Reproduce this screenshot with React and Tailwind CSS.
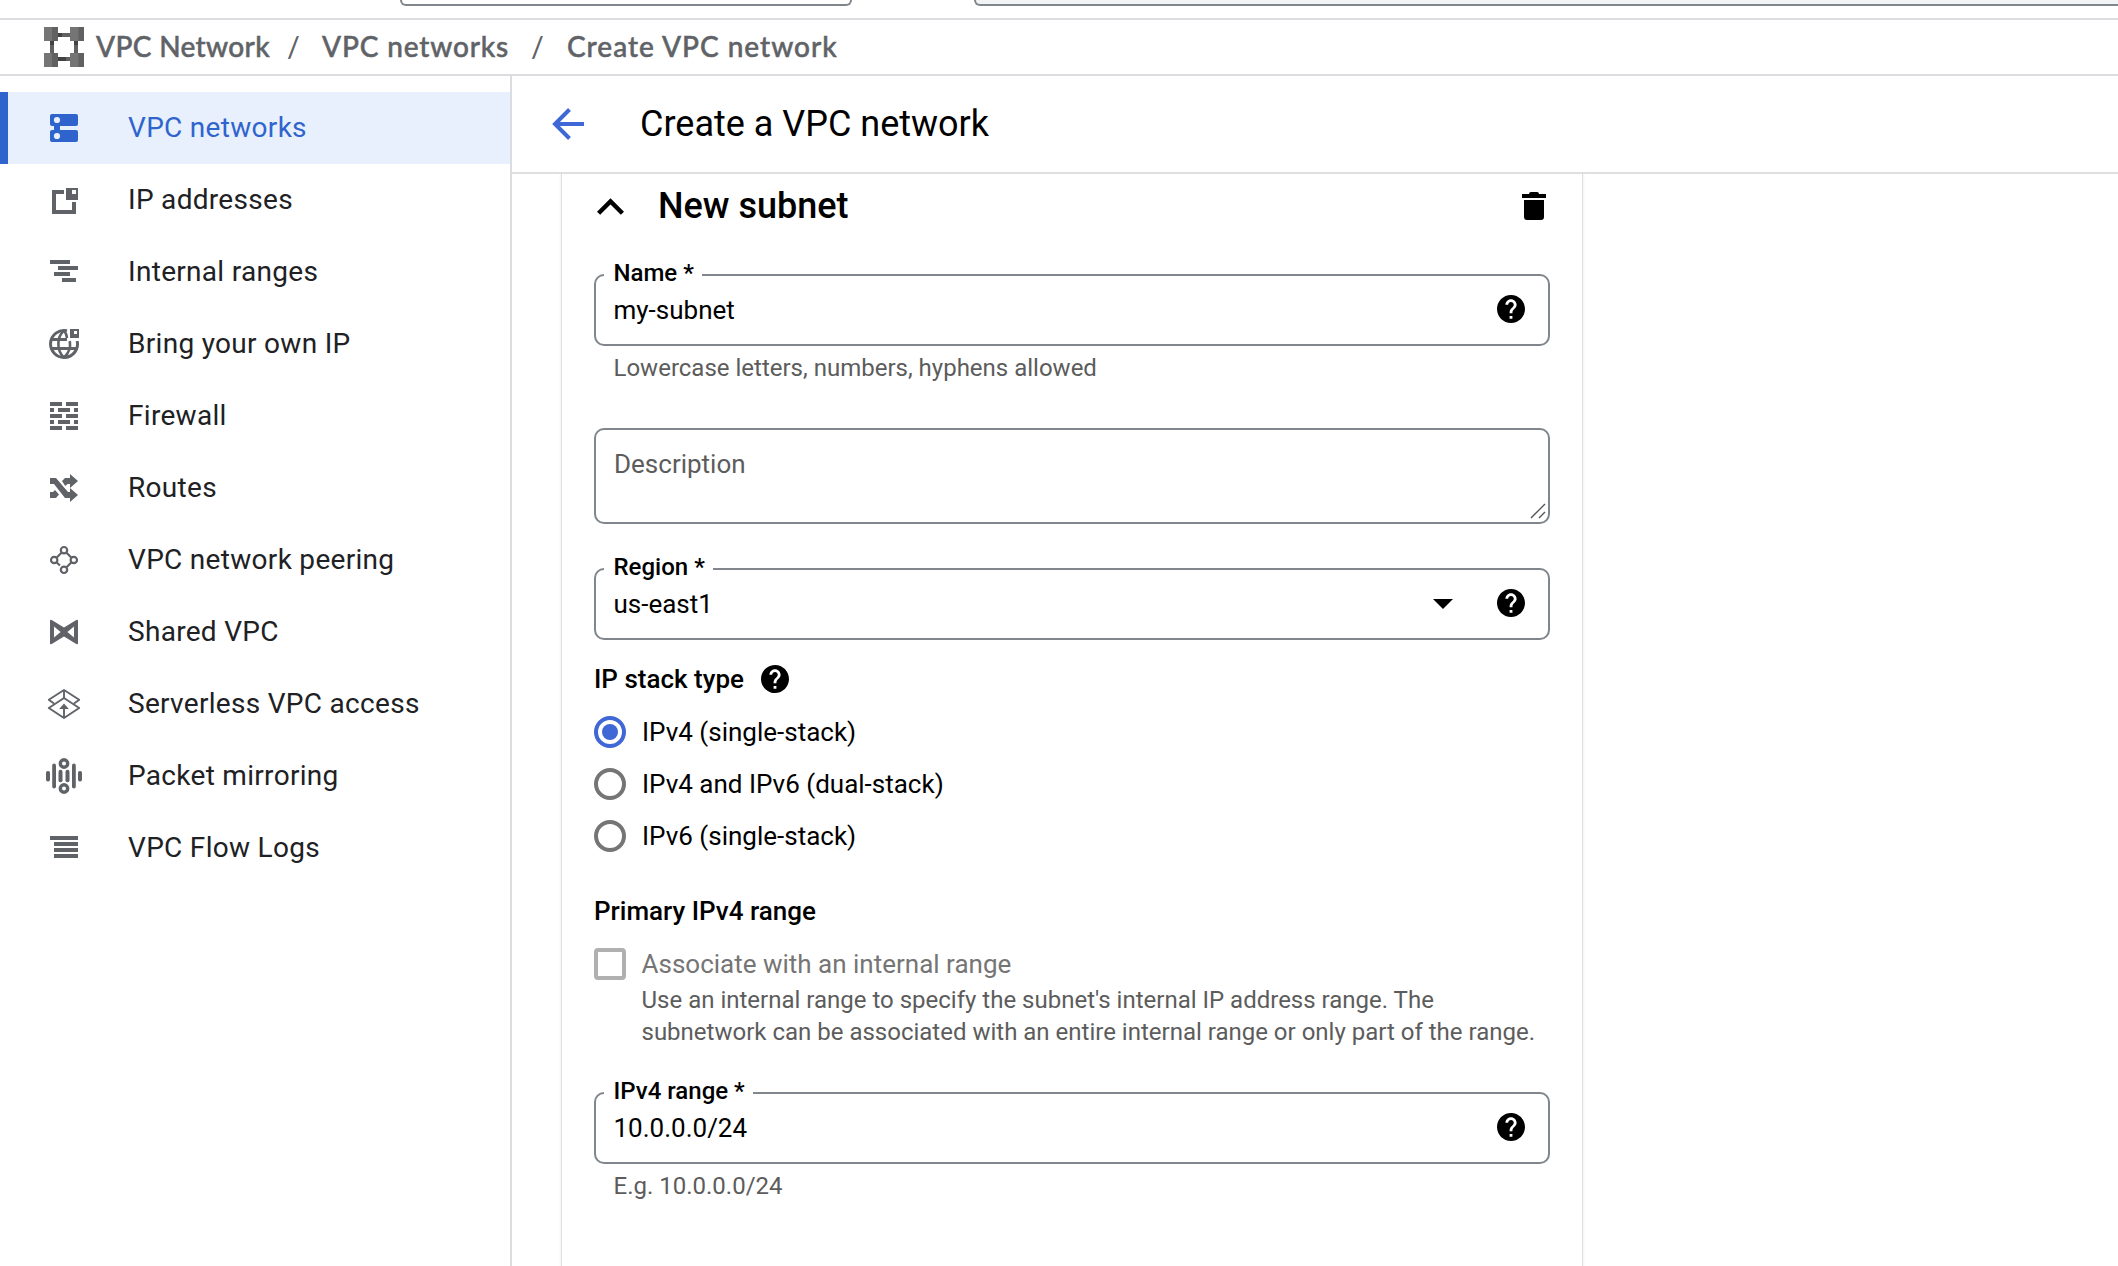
import React from "react";

function Icon({ children }) {
  return (
    <svg width="36" height="36" viewBox="0 0 36 36" fill="currentColor" className="shrink-0">
      {children}
    </svg>
  );
}

const icons = {
  networks: (
    <Icon>
      <rect x="4" y="4" width="28" height="12" rx="2" />
      <rect x="4" y="20" width="28" height="12" rx="2" />
      <rect x="8" y="14" width="6" height="8" />
      <circle cx="11" cy="10" r="3.1" fill="#e8f0fe" />
      <circle cx="11" cy="26" r="3.1" fill="#e8f0fe" />
    </Icon>
  ),
  addresses: (
    <Icon>
      <path d="M6 8h12v4h-8v16h16v-8h4v12H6z" />
      <path fillRule="evenodd" d="M20 6h12v12H20zM26 8v4h4V8z" />
    </Icon>
  ),
  ranges: (
    <Icon>
      <path d="M4 6h20v4H4zM12 12h20v4H12zM8 18h16v4H8zM16 24h14v4H16z" />
    </Icon>
  ),
  globe: (
    <Icon>
      <g fill="none" stroke="currentColor" strokeWidth="3">
        <path d="M21 4.8A13.5 13.5 0 1 0 31.2 15" />
        <path d="M5 13.5h16M5 22.5h26" strokeWidth="2.8" />
        <path d="M18 4.500C10.500 11 10.500 25 18 31.500C23 27 24.800 21 23.800 15M18 4.500C20 7 20.800 9 21 12" strokeWidth="2.600" strokeLinejoin="round" />
      </g>
      <path fillRule="evenodd" d="M24 3h9v9h-9zM28 5v3h3V5z" />
    </Icon>
  ),
  firewall: (
    <Icon>
      <path d="M4 4h12v4H4zM20 4h12v4H20zM4 10h4v4H4zM12 10h12v4H12zM28 10h4v4h-4zM4 16h12v4H4zM20 16h12v4H20zM4 22h4v4H4zM12 22h12v4H12zM28 22h4v4h-4zM4 28h12v4H4zM20 28h12v4H20z" />
    </Icon>
  ),
  routes: (
    <Icon>
      <path d="M4 8h6l12 14h2v-4l8 7-8 7v-4h-5L8 14H4z" />
      <path d="M16 11l3-3h5V4l8 7-8 7v-4h-2.500l-2.300 2z" />
      <path d="M4 22h3l2-2 4 4.500L10 28H4z" />
    </Icon>
  ),
  peering: (
    <Icon>
      <g fill="none" stroke="currentColor" strokeWidth="2.200">
        <circle cx="18" cy="8.200" r="3.200" />
        <circle cx="8.200" cy="18" r="3.200" />
        <circle cx="27.800" cy="18" r="3.200" />
        <circle cx="18" cy="27.800" r="3.200" />
        <path d="M15.500 10.700l-5 5M20.500 10.700l5 5M25.500 20.300l-5 5M10.500 20.300l3.400 3.200" />
      </g>
    </Icon>
  ),
  shared: (
    <Icon>
      <path
        fillRule="evenodd"
        d="M4 7q0-1.800 1.700-1L18 13.400 30.300 6q1.700-.8 1.700 1v22q0 1.800-1.700 1L18 22.600 5.700 30Q4 30.800 4 29zM8 12.500v11L14.600 18zM28 12.500v11L21.400 18z"
      />
    </Icon>
  ),
  serverless: (
    <Icon>
      <g fill="none" stroke="currentColor" strokeWidth="1.900" strokeLinejoin="round">
        <path d="M8 17.500L2.800 13.700 18 4l15.200 9.700L28 17.500" />
        <path d="M18 4v8" />
        <path d="M18 12L2.800 22 18 32l15.200-10z" />
        <path d="M18 31V20" />
      </g>
      <path d="M18 17.500l4.800 5.500h-9.600z" />
    </Icon>
  ),
  mirroring: (
    <Icon>
      <rect x="0" y="13" width="4" height="10.500" rx="1.800" />
      <rect x="6.200" y="5.500" width="3.800" height="25" rx="1.900" />
      <rect x="12.500" y="11.800" width="4" height="12.400" rx="1.900" />
      <rect x="19.500" y="11.800" width="4" height="12.400" rx="1.900" />
      <rect x="26" y="5.500" width="3.800" height="25" rx="1.900" />
      <rect x="32" y="13" width="4" height="10.500" rx="1.800" />
      <circle cx="18" cy="5.500" r="3.700" fill="none" stroke="currentColor" strokeWidth="3.400" />
      <circle cx="18" cy="30.500" r="3.700" fill="none" stroke="currentColor" strokeWidth="3.400" />
    </Icon>
  ),
  logs: (
    <Icon>
      <path d="M4 6h28v4H4zM8 12h24v4H8zM8 18h24v4H8zM8 24h24v4H8z" />
    </Icon>
  ),
};

const nav = [
  ["VPC networks", "networks"],
  ["IP addresses", "addresses"],
  ["Internal ranges", "ranges"],
  ["Bring your own IP", "globe"],
  ["Firewall", "firewall"],
  ["Routes", "routes"],
  ["VPC network peering", "peering"],
  ["Shared VPC", "shared"],
  ["Serverless VPC access", "serverless"],
  ["Packet mirroring", "mirroring"],
  ["VPC Flow Logs", "logs"],
];

function Help() {
  return (
    <svg width="28" height="28" viewBox="2 2 20 20" className="shrink-0">
      <path d="M12 2C6.480 2 2 6.480 2 12s4.480 10 10 10 10-4.480 10-10S17.520 2 12 2zm1 17h-2v-2h2v2zm2.070-7.750l-.9.920C13.450 12.900 13 13.500 13 15h-2v-.5c0-1.100.450-2.100 1.170-2.830l1.240-1.260c.370-.360.590-.860.590-1.410 0-1.100-.9-2-2-2s-2 .9-2 2H8c0-2.210 1.790-4 4-4s4 1.790 4 4c0 .880-.360 1.680-.930 2.250z" />
    </svg>
  );
}

function ProductLogo() {
  return (
    <svg width="40" height="40" viewBox="0 0 40 40" className="shrink-0">
      <path fill="#616161" d="M14 6h12v4H14zM14 30h12v4H14zM6 14h4v12H6zM30 14h4v12h-4z" />
      <path fill="#424242" d="M14 6h4v4h-4zM14 30h8v4h-8zM6 14h4v4H6zM30 14h4v4h-4z" />
      <path fill="#757575" d="M0 0h14v14H0zM26 0h14v14H26zM0 26h14v14H0zM26 26h14v14H26z" />
      <path fill="#616161" d="M8 0h6v14H8zM34.500 0H40v14h-5.500zM8 26h6v14H8zM34.500 26H40v14h-5.500z" />
    </svg>
  );
}

function Field({ label, value, helper, dropdown }) {
  return (
    <div>
      <div className="relative flex h-[72px] items-center rounded-[10px] border-2 border-[#80868b] pr-[23px] pl-[17.5px]">
        <span className="absolute -top-[19px] left-2 bg-white pr-[8.500px] pl-[9.500px] text-2xl font-medium">{label}</span>
        <span className="grow text-[26px] leading-8">{value}</span>
        {dropdown && (
          <svg width="20" height="10" viewBox="0 0 20 10" className="mr-11">
            <path d="M0 0h20L10 10z" />
          </svg>
        )}
        <span className="pb-[2px]">
          <Help />
        </span>
      </div>
      {helper && <p className="pt-[6px] pl-[19.500px] text-2xl text-[#5c5c5c]">{helper}</p>}
    </div>
  );
}

function Radio({ label, checked }) {
  return (
    <label className="flex h-[52px] items-center gap-4">
      <span
        className={
          checked
            ? "flex size-8 items-center justify-center rounded-full border-4 border-[#3f67d5]"
            : "size-8 rounded-full border-4 border-[#757575]"
        }
      >
        {checked && <span className="size-4 rounded-full bg-[#3f67d5]" />}
      </span>
      <span className="text-[26px] leading-8">{label}</span>
    </label>
  );
}

function Sidebar() {
  return (
    <nav className="w-[512px] shrink-0 border-r-2 border-[#dadce0] pt-4">
      {nav.map(([label, icon], i) => (
        <a
          key={label}
          className={
            i === 0
              ? "flex h-[72px] items-center gap-[46px] border-l-8 border-[#3064cd] bg-[#e8f0fe] pl-[38px] text-[#3064cd]"
              : "flex h-[72px] items-center gap-[46px] pl-[46px] text-[#5f6368]"
          }
        >
          {icons[icon]}
          <span
            className={
              i === 0
                ? "text-[28px] leading-9 tracking-[0.3px]"
                : "text-[28px] leading-9 tracking-[0.3px] text-[#202124]"
            }
          >
            {label}
          </span>
        </a>
      ))}
    </nav>
  );
}

export default function App() {
  return (
    <div className="flex h-[1266px] w-[2118px] flex-col overflow-hidden bg-white font-[Roboto,sans-serif] text-black">
      <div className="flex h-5 shrink-0 items-start border-b-2 border-[#dadce0] pl-[400px]">
        <div className="h-[6px] w-[452px] shrink-0 rounded-b-lg border-2 border-t-0 border-[#80868b]" />
        <div className="ml-[122px] h-[6px] grow rounded-bl-lg border-b-2 border-l-2 border-[#80868b] bg-[#f1f3f4]" />
      </div>

      <div className="flex h-14 shrink-0 items-center border-b-2 border-[#dadce0] pl-11 font-[Lato,sans-serif] text-[28px] leading-9 font-medium text-[#5f6368]">
        <ProductLogo />
        <div className="flex pb-[2px] [-webkit-text-stroke:0.5px_#5f6368]">
          <span className="ml-3 w-[191px] tracking-[0.350px]">VPC Network</span>
          <span className="w-[35px] [-webkit-text-stroke:0]">/</span>
          <span className="w-[209px] tracking-[0.850px]">VPC networks</span>
          <span className="w-[36px] [-webkit-text-stroke:0]">/</span>
          <span className="tracking-[1px]">Create VPC network</span>
        </div>
      </div>

      <div className="flex min-h-0 grow">
        <Sidebar />
        <main className="flex min-w-0 grow flex-col">
          <header className="flex h-[98px] shrink-0 items-center border-b-2 border-[#dfdfdf] pl-10">
            <svg width="32" height="32" viewBox="0 0 32 32" fill="none" stroke="#3f67d5" strokeWidth="4">
              <path d="M32 16H4M17.500 1.500L3 16l14.500 14.500" />
            </svg>
            <h1 className="ml-14 text-4xl">Create a VPC network</h1>
          </header>

          <div className="min-h-0 grow overflow-hidden pl-[50px]">
            <section className="h-full w-[1020px] px-8 shadow-[0_0_0_1px_#e0e0e0,0_0_3px_1px_rgba(0,0,0,0.1)]">
              <div className="flex h-16 items-center">
                <svg width="27" height="17" viewBox="6 8 12 7.410" className="ml-[2.500px]">
                  <path d="M12 8l-6 6 1.410 1.410L12 10.830l4.590 4.580L18 14z" />
                </svg>
                <h2 className="ml-[34.500px] grow text-4xl font-medium">New subnet</h2>
                <svg width="24" height="28" viewBox="0 0 24 28" className="mr-1">
                  <path d="M7 2q0-2 2-2h6q2 0 2 2h7v4H0V2zM2 8h20v17q0 3-3 3H5q-3 0-3-3z" />
                </svg>
              </div>

              <div className="pt-9">
                <Field label="Name *" value="my-subnet" helper="Lowercase letters, numbers, hyphens allowed" />
              </div>

              <div className="mt-11 flex h-24 items-start justify-between rounded-[10px] border-2 border-[#80868b] pt-[18px] pl-[18px]">
                <span className="text-[26px] leading-8 text-[#5c5c5c]">Description</span>
                <svg width="16" height="16" viewBox="0 0 16 16" className="mt-[55px] mr-[2px]" stroke="#555" strokeWidth="1.400">
                  <path d="M1 15L15 1M9 15l6-6" />
                </svg>
              </div>

              <div className="pt-11">
                <Field label="Region *" value="us-east1" dropdown />
              </div>

              <div className="mt-[23px] flex h-8 items-center gap-[17px]">
                <span className="text-[26px] leading-8 font-medium">IP stack type</span>
                <Help />
              </div>

              <div className="pt-[11px]">
                <Radio label="IPv4 (single-stack)" checked />
                <Radio label="IPv4 and IPv6 (dual-stack)" />
                <Radio label="IPv6 (single-stack)" />
              </div>

              <h3 className="pt-[33px] text-[26px] leading-8 font-medium">Primary IPv4 range</h3>

              <div className="mt-[21px] flex gap-[15.500px]">
                <span className="size-8 shrink-0 rounded border-4 border-[#b0b0b0]" />
                <div>
                  <p className="text-[26px] leading-8 text-[#757575]">Associate with an internal range</p>
                  <p className="mt-1 text-2xl text-[#5c5c5c]">
                    Use an internal range to specify the subnet's internal IP address range. The
                    <br />
                    subnetwork can be associated with an entire internal range or only part of the range.
                  </p>
                </div>
              </div>

              <div className="pt-11">
                <Field label="IPv4 range *" value="10.0.0.0/24" helper="E.g. 10.0.0.0/24" />
              </div>
            </section>
          </div>
        </main>
      </div>
    </div>
  );
}
